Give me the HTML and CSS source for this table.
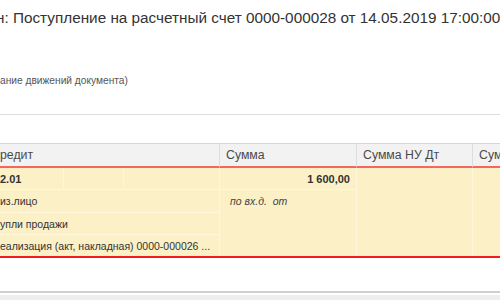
FILE: index.html
```html
<!DOCTYPE html>
<html lang="ru">
<head>
    <meta charset="UTF-8">
    <title>Движения документа</title>
    <link rel="stylesheet" href="styles.css">
</head>
<body>
    <div class="page">
        <h1 class="doc-title">н: Поступление на расчетный счет 0000-000028 от 14.05.2019 17:00:00</h1>
        <div class="doc-note">ание движений документа)</div>

        <div class="toolbar-line"></div>

        <div class="moves">
            <div class="cell head span-3 edge">редит</div>
            <div class="cell head">Сумма</div>
            <div class="cell head">Сумма НУ Дт</div>
            <div class="cell head">Сумма НУ Кт</div>

            <!-- selected record: account row with its subconto -->
            <div class="cell sel strong edge">2.01</div>
            <div class="cell sel"></div>
            <div class="cell sel"></div>
            <div class="cell sel strong num">1 600,00</div>
            <div class="cell sel tall"></div>
            <div class="cell sel tall"></div>

            <div class="cell sel span-3 edge">из.лицо</div>
            <div class="cell sel merged"><i>по вх.д.&nbsp;&nbsp;от</i></div>
            <div class="cell sel span-3 edge">упли продажи</div>
            <div class="cell sel span-3 edge last">еализация (акт, накладная) 0000-000026 ...</div>
        </div>

        <div class="empty-area"></div>
        <div class="footer-bar"></div>
    </div>
</body>
</html>
```

FILE: styles.css
```css
html, body {
    margin: 0;
    padding: 0;
    background: #fff;
}
body {
    font-family: "Liberation Sans", Arial, sans-serif;
    color: #333;
    overflow: hidden;
}
.page {
    width: 500px;
    height: 300px;
    overflow: hidden;
}
.doc-title {
    margin: 0;
    padding-top: 8px;
    height: 28px;
    font-size: 15.3px;
    font-weight: normal;
    line-height: 20px;
    white-space: nowrap;
    text-indent: -4px;
    color: #333;
}
.doc-note {
    margin-top: 38px;
    font-size: 10.2px;
    line-height: 14px;
    color: #555;
    white-space: nowrap;
}
.toolbar-line {
    margin-top: 26px;
    border-top: 1px solid #ddd;
    height: 28px;
}

/* movements grid */
.moves {
    display: grid;
    grid-template-columns: 64px 60px 96px 137px 116px 60px;
    grid-template-rows: 24px 22px 23px 22px 21px;
    border-top: 1px solid #d6d6d6;
    border-bottom: 2px solid #f31c1c;
    font-size: 10.5px;
    width: 533px;
}
.cell {
    box-sizing: border-box;
    padding: 0 7px;
    display: flex;
    align-items: center;
    white-space: nowrap;
    overflow: hidden;
    border-right: 1px solid #fff6dc;
    border-bottom: 1px solid #fff6dc;
}
.edge {
    padding-left: 0;
}
.head {
    background: #f2f2f2;
    color: #4a4a4a;
    font-size: 12.3px;
    padding-left: 6px;
    border-right-color: #dcdcdc;
    border-bottom: 2px solid #f4665e;
}
.head.edge {
    padding-left: 0;
}
.sel {
    background: #fcf0c6;
    color: #333;
}
.strong {
    font-weight: bold;
    font-size: 11px;
}
.num {
    justify-content: flex-end;
    padding-right: 6px;
}
.span-3 {
    grid-column: span 3;
}
.tall {
    grid-row: span 4;
    border-bottom: none;
}
.merged {
    grid-row: span 3;
    align-items: flex-start;
    padding-top: 5px;
    padding-left: 10px;
    border-bottom: none;
    color: #444;
}
.last {
    border-bottom: none;
}
.empty-area {
    height: 33px;
    border-bottom: 2px solid #d0d0d0;
}
.footer-bar {
    margin-top: 2px;
    height: 20px;
    background: #eeeeee;
}
```
